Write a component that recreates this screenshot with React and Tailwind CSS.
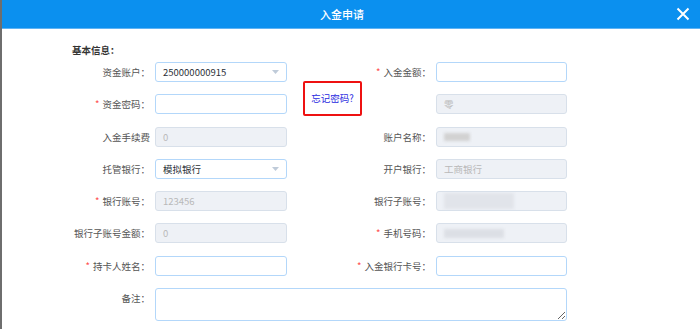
import React from 'react';

const FONT = '"Noto Sans CJK SC", "Noto Sans", "Liberation Sans", sans-serif';

function Label({ text, required }) {
  return (
    <div className="w-[148px] shrink-0 flex justify-end items-center text-[9.5px] text-[#555]">
      {required && <span className="text-[#ff4949] mr-[3px]">*</span>}
      <span>{text}</span>
    </div>
  );
}

function RightLabel({ text, required }) {
  return (
    <div className="w-[144px] shrink-0 flex justify-end items-center text-[9.5px] text-[#555]">
      {required && <span className="text-[#ff4949] mr-[3px]">*</span>}
      <span>{text}</span>
    </div>
  );
}

function TextInput({ w = 'w-[132px]' }) {
  return (
    <div className={`${w} h-[20px] shrink-0 rounded-[3px] border border-[#b3d7fa] bg-white`}></div>
  );
}

function Disabled({ w = 'w-[132px]', value, children }) {
  return (
    <div className={`${w} h-[20px] shrink-0 rounded-[3px] border border-[#d8e0ea] bg-[#eef1f6] flex items-center pl-[7px] text-[9.5px] text-[#b9b9b9] overflow-hidden`}>
      {value}
      {children}
    </div>
  );
}

function Select({ value }) {
  return (
    <div className="w-[132px] h-[20px] shrink-0 rounded-[3px] border border-[#b3d7fa] bg-white flex items-center justify-between pl-[7px] pr-[7px] text-[9.5px] text-[#2a2f36]">
      <span>{value}</span>
      <svg width="7" height="4" viewBox="0 0 7 4">
        <path d="M0 0 L7 0 L3.5 4 Z" fill="#bfcbd9" />
      </svg>
    </div>
  );
}

function Redacted({ w, h, color }) {
  return <div className={`${w} ${h} ${color} blur-[1.5px] rounded-[1px]`}></div>;
}

function Row({ children }) {
  return <div className="h-[32.25px] flex items-center">{children}</div>;
}

export default function App() {
  return (
    <div
      className="w-[700px] h-[329px] overflow-hidden bg-white border-l-2 border-[#6e6e6e]"
      style={{ fontFamily: FONT }}
    >
      {/* Header */}
      <div className="h-[29px] bg-[#0b90ef] border-b border-[#5fb3f4] flex items-center pr-[10px]">
        <div className="flex-1"></div>
        <div className="text-white text-[11px] font-medium pr-[8px]">入金申请</div>
        <div className="flex-1 flex justify-end">
          <svg width="14" height="14" viewBox="0 0 14 14">
            <path d="M1.5 1.5 L12.5 12.5 M12.5 1.5 L1.5 12.5" stroke="white" strokeWidth="2" />
          </svg>
        </div>
      </div>

      {/* Body */}
      <div className="pt-[15px]">
        <div className="pl-[70px] h-[12px] leading-[12px] text-[9.5px] font-bold text-[#333]">基本信息：</div>

        <Row>
          <Label text="资金账户：" />
          <div className="ml-[5px]"><Select value="250000000915" /></div>
          <RightLabel text="入金金额：" required />
          <div className="ml-[5px]"><TextInput w="w-[131px]" /></div>
        </Row>

        <Row>
          <Label text="资金密码：" required />
          <div className="ml-[5px]"><TextInput /></div>
          <div className="w-[144px] shrink-0 flex items-center">
            <div className="ml-[16px] -mt-[12px] w-[59px] h-[35px] border-2 border-[#ee1111] rounded-[2px] flex items-center justify-center text-[9.5px] text-[#2a2ae0]">
              忘记密码?
            </div>
          </div>
          <div className="ml-[5px]"><Disabled w="w-[131px]" value="零" /></div>
        </Row>

        <Row>
          <Label text="入金手续费" />
          <div className="ml-[5px]"><Disabled value="0" /></div>
          <RightLabel text="账户名称：" />
          <div className="ml-[5px]">
            <Disabled w="w-[131px]">
              <Redacted w="w-[26px]" h="h-[8px]" color="bg-[#d2d2d2]" />
            </Disabled>
          </div>
        </Row>

        <Row>
          <Label text="托管银行：" />
          <div className="ml-[5px]"><Select value="模拟银行" /></div>
          <RightLabel text="开户银行：" />
          <div className="ml-[5px]"><Disabled w="w-[131px]" value="工商银行" /></div>
        </Row>

        <Row>
          <Label text="银行账号：" required />
          <div className="ml-[5px]"><Disabled value="123456" /></div>
          <RightLabel text="银行子账号：" />
          <div className="ml-[5px]">
            <Disabled w="w-[131px]">
              <Redacted w="w-[70px]" h="h-[16px]" color="bg-[#e1e4ea]" />
            </Disabled>
          </div>
        </Row>

        <Row>
          <Label text="银行子账号金额：" />
          <div className="ml-[5px]"><Disabled value="0" /></div>
          <RightLabel text="手机号码：" required />
          <div className="ml-[5px]">
            <Disabled w="w-[131px]">
              <Redacted w="w-[60px]" h="h-[9px]" color="bg-[#dcdfe5]" />
            </Disabled>
          </div>
        </Row>

        <Row>
          <Label text="持卡人姓名：" required />
          <div className="ml-[5px]"><TextInput /></div>
          <RightLabel text="入金银行卡号：" required />
          <div className="ml-[5px]"><TextInput w="w-[131px]" /></div>
        </Row>

        <div className="mt-[6px] flex items-start">
          <div className="w-[148px] shrink-0 text-right pt-[3px] text-[9.5px] text-[#555]">备注：</div>
          <textarea className="ml-[5px] w-[412px] h-[33px] rounded-[3px] border border-[#b3d7fa] bg-white outline-none"></textarea>
        </div>
      </div>
    </div>
  );
}
